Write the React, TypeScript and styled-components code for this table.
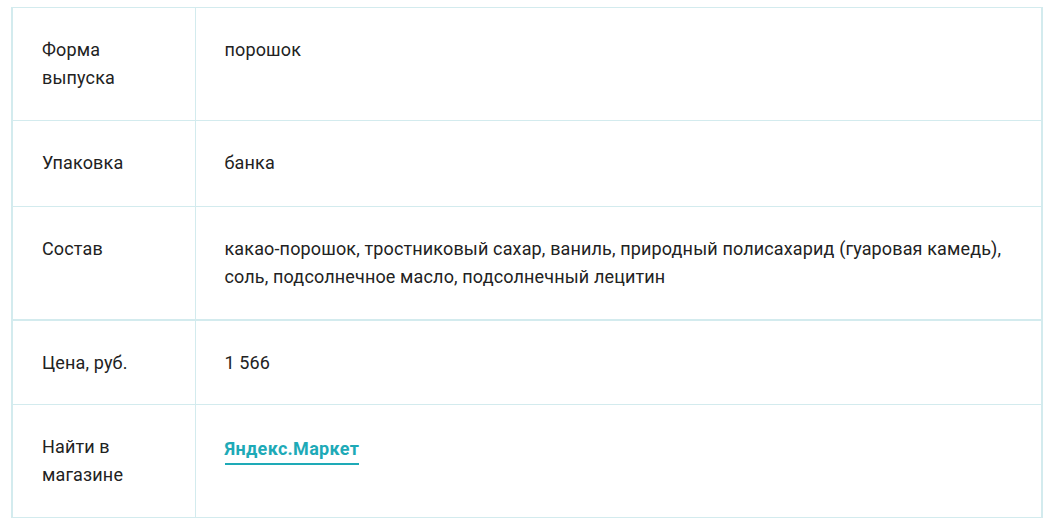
import React from "react";
import styled, { createGlobalStyle } from "styled-components";

const Global = createGlobalStyle`
  html, body { margin: 0; padding: 0; background: #fff; }
  body { font-family: Roboto, "Liberation Sans", Arial, sans-serif; color: #222; }
`;

const Wrap = styled.div`
  padding: 7px 8px 0 11px;
`;

const Table = styled.table`
  width: 1032px;
  border-collapse: collapse;
  border-left: 2px solid #d3ebee;
  border-right: 2px solid #d3ebee;
  font-size: 18px;
  line-height: 28px;
  letter-spacing: 0.14px;
`;

const Row = styled.tr<{ $thick?: boolean }>`
  border-top: 1px solid #d3ebee;
  border-bottom: ${(p) => (p.$thick ? "2px" : "1px")} solid #d3ebee;
`;

const Cell = styled.td<{ $label?: boolean; $h: number }>`
  border-left: 1px solid #d3ebee;
  padding: 28px 29px 0 29px;
  height: ${(p) => p.$h}px;
  box-sizing: border-box;
  vertical-align: top;
  width: ${(p) => (p.$label ? "183px" : "auto")};
`;

const Link = styled.a`
  color: #1eaab7;
  font-weight: 700;
  letter-spacing: 0.3px;
  text-decoration: none;
  vertical-align: -2px;
  border-bottom: 2px solid #1eaab7;
  padding-bottom: 4px;
`;

const rows: { label: React.ReactNode; value: React.ReactNode; h: number; thick?: boolean }[] = [
  { label: <>Форма<br />выпуска</>, value: "порошок", h: 113 },
  { label: "Упаковка", value: "банка", h: 86 },
  {
    label: "Состав",
    value:
      "какао-порошок, тростниковый сахар, ваниль, природный полисахарид (гуаровая камедь), соль, подсолнечное масло, подсолнечный лецитин",
    h: 113,
    thick: true,
  },
  { label: "Цена, руб.", value: "1 566", h: 85 },
  { label: <>Найти в<br />магазине</>, value: <Link href="#">Яндекс.Маркет</Link>, h: 113 },
];

export default function App() {
  return (
    <Wrap>
      <Global />
      <Table>
        <tbody>
          {rows.map((r, i) => (
            <Row key={i} $thick={r.thick}>
              <Cell $label $h={r.h}>{r.label}</Cell>
              <Cell $h={r.h}>{r.value}</Cell>
            </Row>
          ))}
        </tbody>
      </Table>
    </Wrap>
  );
}
